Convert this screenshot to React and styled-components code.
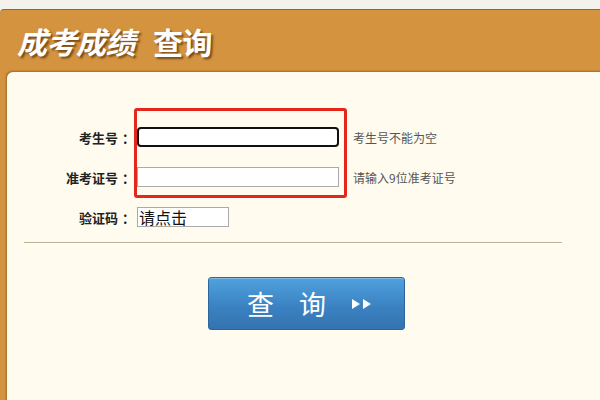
import styled, { createGlobalStyle } from 'styled-components';

const GlobalStyle = createGlobalStyle`
  html, body {
    margin: 0;
    padding: 0;
    width: 600px;
    height: 400px;
    overflow: hidden;
    background: #f3f2ec;
    font-family: 'Noto Sans CJK SC', 'Noto Sans', sans-serif;
  }
`;

const Page = styled.div`
  padding-top: 9px;
  width: 620px;
`;

const Frame = styled.div`
  background: #d4933f;
  border-top: 1px solid #8d6a35;
  border-top-left-radius: 4px;
  padding-left: 7px;
  height: 400px;
`;

const Header = styled.div`
  height: 62px;
  display: flex;
  align-items: center;
  padding-left: 10px;
  column-gap: 18px;
  color: #fff;
  font-size: 30px;
  font-weight: 700;
  text-shadow: 2px 2px 2px rgba(60, 30, 0, 0.6);
  letter-spacing: -0.5px;
`;

const TitlePart = styled.span`
  font-style: ${(p) => (p.$italic ? 'italic' : 'normal')};
  line-height: 1;
`;

const Panel = styled.div`
  position: relative;
  background: #fffbef;
  border-top-left-radius: 6px;
  box-shadow: -1px -1px 2px rgba(90, 60, 20, 0.45);
  height: 340px;
  padding-top: 55px;
  box-sizing: border-box;
`;

const Form = styled.div`
  display: grid;
  grid-template-columns: 124px 202px auto;
  grid-auto-rows: 20px;
  column-gap: 6px;
  row-gap: 20px;
  align-items: center;
`;

const Label = styled.div`
  text-align: right;
  font-size: 13px;
  font-weight: 700;
  color: #222;
  white-space: nowrap;
`;

const Colon = styled.span`
  display: inline-block;
  width: 13px;
  padding-left: 4px;
  box-sizing: border-box;
  text-align: left;
`;

const Input = styled.div`
  box-sizing: border-box;
  height: 20px;
  width: ${(p) => p.$width || '202px'};
  background: #fff;
  border: ${(p) => (p.$focused ? '2px solid #111' : '1px solid #aaa')};
  border-radius: ${(p) => (p.$focused ? '4px' : '0')};
`;

const Captcha = styled(Input)`
  width: 92px;
  font-size: 16px;
  line-height: 18px;
  color: #111;
  padding-left: 1px;
  white-space: nowrap;
`;

const Hint = styled.div`
  margin-left: 8px;
  font-size: 12px;
  color: #555;
  white-space: nowrap;
`;

const Highlight = styled.div`
  position: absolute;
  left: 127px;
  top: 36px;
  width: 213px;
  height: 90px;
  box-sizing: border-box;
  border: 3px solid #e4261c;
  border-radius: 3px;
  pointer-events: none;
`;

const Divider = styled.div`
  margin: 15px 0 0 17px;
  width: 538px;
  height: 1px;
  background: #bdb195;
  border-bottom: 1px solid #fff;
`;

const SubmitButton = styled.button`
  margin: 33px 0 0 201px;
  width: 197px;
  height: 53px;
  box-sizing: border-box;
  border: 1px solid #2d669a;
  border-radius: 3px;
  background: linear-gradient(#4fa1de, #3a80c0 60%, #3374b0);
  box-shadow: inset 0 1px 0 rgba(255, 255, 255, 0.3);
  display: flex;
  align-items: center;
  padding: 0 0 0 38px;
  column-gap: 25px;
  color: #fff;
  font-family: 'Noto Sans CJK SC', sans-serif;
  font-size: 27px;
  font-weight: 400;
  cursor: pointer;
`;

const Arrows = () => (
  <svg width="22" height="12" viewBox="0 0 22 12">
    <polygon points="1,1 9,6 1,11" fill="#fff" />
    <polygon points="12,1 20,6 12,11" fill="#fff" />
  </svg>
);

const FieldLabel = ({ children }) => (
  <Label>
    {children}
    <Colon>：</Colon>
  </Label>
);

export default function App() {
  return (
    <>
      <GlobalStyle />
      <Page>
        <Frame>
          <Header>
            <TitlePart $italic>成考成绩</TitlePart>
            <TitlePart>查询</TitlePart>
          </Header>
          <Panel>
            <Form>
              <FieldLabel>考生号</FieldLabel>
              <Input $focused />
              <Hint>考生号不能为空</Hint>

              <FieldLabel>准考证号</FieldLabel>
              <Input />
              <Hint>请输入9位准考证号</Hint>

              <FieldLabel>验证码</FieldLabel>
              <Captcha>请点击</Captcha>
              <span />
            </Form>
            <Highlight />
            <Divider />
            <SubmitButton>
              <span>查</span>
              <span>询</span>
              <Arrows />
            </SubmitButton>
          </Panel>
        </Frame>
      </Page>
    </>
  );
}
